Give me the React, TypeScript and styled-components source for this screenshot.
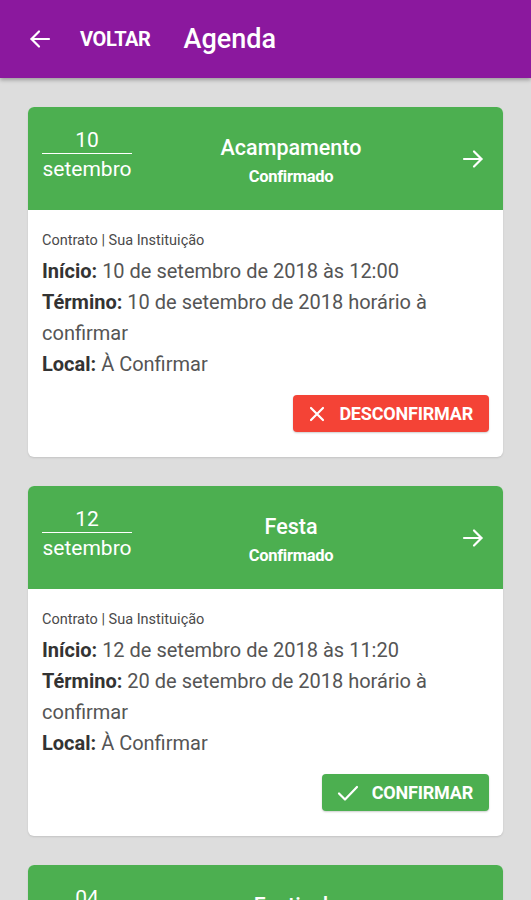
import React from "react";
import styled, { createGlobalStyle } from "styled-components";

const GlobalStyle = createGlobalStyle`
   html, body {
      margin: 0;
      padding: 0;
      background: #dddddd;
      font-family: Roboto, "Noto Sans", sans-serif;
   }
   * {
      box-sizing: border-box;
   }
`;

const Page = styled.div`
   width: 531px;
   height: 900px;
   background: #dddddd;
   overflow: hidden;
`;

const TopBar = styled.header`
   height: 78px;
   background: #8b189e;
   display: flex;
   align-items: center;
   padding-left: 28px;
   color: #fff;
   box-shadow: 0 2px 4px rgba(0, 0, 0, 0.3);
   position: relative;
   z-index: 1;
`;

const BackLabel = styled.span`
   font-weight: 700;
   font-size: 20px;
   margin-left: 28px;
   letter-spacing: -0.4px;
`;

const Title = styled.h1`
   margin: 0 0 0 33px;
   font-size: 27px;
   font-weight: 500;
`;

const List = styled.main`
   display: flex;
   flex-direction: column;
   gap: 29px;
   padding: 29px 28px 0 28px;
`;

const Card = styled.article`
   background: #fff;
   border-radius: 6px;
   overflow: hidden;
   box-shadow: 0 1px 2px rgba(0, 0, 0, 0.12);
`;

const CardHead = styled.div`
   height: 103px;
   background: #4caf50;
   color: #fff;
   display: flex;
   align-items: center;
   padding: 0 18px 0 14px;
`;

const DateBlock = styled.div`
   width: 90px;
   display: flex;
   flex-direction: column;
   align-items: center;
   margin-top: -8px;

   .day {
      font-size: 21px;
      line-height: 24px;
      width: 100%;
      text-align: center;
      border-bottom: 1.5px solid #fff;
      padding-bottom: 1px;
   }

   .month {
      font-size: 21px;
      line-height: 26px;
      margin-top: 2px;
   }
`;

const EventInfo = styled.div`
   flex: 1;
   display: flex;
   flex-direction: column;
   align-items: center;
   margin-top: 3px;
   padding-right: 11px;

   .name {
      font-size: 21.5px;
      font-weight: 500;
      line-height: 26px;
   }

   .status {
      font-size: 16.5px;
      font-weight: 700;
      margin-top: 6px;
      letter-spacing: -0.3px;
   }
`;

const CardBody = styled.div`
   padding: 22px 14px 25px 14px;
   display: flex;
   flex-direction: column;
`;

const Origin = styled.div`
   font-size: 14.5px;
   line-height: 18px;
   color: #4a4a4a;
   margin-bottom: 6px;
`;

const Line = styled.p`
   margin: 0;
   font-size: 20px;
   line-height: 31px;
   color: #555;

   b {
      color: #333;
      font-weight: 700;
   }
`;

const Actions = styled.div`
   display: flex;
   justify-content: flex-end;
   margin-top: 15px;
`;

const ActionButton = styled.button<{ $variant: "confirm" | "cancel" }>`
   height: 37px;
   border: none;
   border-radius: 4px;
   background: ${({ $variant }) => ($variant === "confirm" ? "#4caf50" : "#f44336")};
   color: #fff;
   display: flex;
   align-items: center;
   gap: 13px;
   padding: 0 16px 0 15px;
   font-family: Roboto, sans-serif;
   font-weight: 700;
   font-size: 18px;
   letter-spacing: -0.2px;
   box-shadow: 0 1px 2px rgba(0, 0, 0, 0.2);
`;

const ArrowIcon = ({ left }: { left?: boolean }) => (
   <svg width="24" height="24" viewBox="0 0 24 24" fill="none" stroke="#fff" strokeWidth="2.2" strokeLinecap="round" strokeLinejoin="round">
      {left ? (
         <>
            <path d="M21 12H3.5" />
            <path d="M11 4.5L3.5 12l7.5 7.5" />
         </>
      ) : (
         <>
            <path d="M3 12h17.5" />
            <path d="M13 4.5l7.5 7.5-7.5 7.5" />
         </>
      )}
   </svg>
);

const CrossIcon = () => (
   <svg width="18" height="18" viewBox="0 0 18 18" stroke="#fff" strokeWidth="2.2" strokeLinecap="round">
      <path d="M3 3l12 12M15 3L3 15" />
   </svg>
);

const CheckIcon = () => (
   <svg width="22" height="18" viewBox="0 0 22 18" fill="none" stroke="#fff" strokeWidth="2.2" strokeLinecap="round" strokeLinejoin="round">
      <path d="M2 9.5l6 6L20 3" />
   </svg>
);

interface EventData {
   day: string;
   month: string;
   name: string;
   status: string;
   start: string;
   end: string;
   place: string;
   confirmed: boolean;
}

const events: EventData[] = [
   {
      day: "10",
      month: "setembro",
      name: "Acampamento",
      status: "Confirmado",
      start: "10 de setembro de 2018 às 12:00",
      end: "10 de setembro de 2018 horário à confirmar",
      place: "À Confirmar",
      confirmed: true
   },
   {
      day: "12",
      month: "setembro",
      name: "Festa",
      status: "Confirmado",
      start: "12 de setembro de 2018 às 11:20",
      end: "20 de setembro de 2018 horário à confirmar",
      place: "À Confirmar",
      confirmed: false
   },
   {
      day: "04",
      month: "outubro",
      name: "Festival",
      status: "Confirmado",
      start: "04 de outubro de 2018 às 10:00",
      end: "04 de outubro de 2018 horário à confirmar",
      place: "À Confirmar",
      confirmed: false
   }
];

const EventCard: React.FC<{ event: EventData }> = ({ event }) => (
   <Card>
      <CardHead>
         <DateBlock>
            <span className="day">{event.day}</span>
            <span className="month">{event.month}</span>
         </DateBlock>
         <EventInfo>
            <span className="name">{event.name}</span>
            <span className="status">{event.status}</span>
         </EventInfo>
         <ArrowIcon />
      </CardHead>
      <CardBody>
         <Origin>Contrato | Sua Instituição</Origin>
         <Line>
            <b>Início:</b> {event.start}
         </Line>
         <Line>
            <b>Término:</b> {event.end}
         </Line>
         <Line>
            <b>Local:</b> {event.place}
         </Line>
         <Actions>
            {event.confirmed ? (
               <ActionButton $variant="cancel">
                  <CrossIcon />
                  DESCONFIRMAR
               </ActionButton>
            ) : (
               <ActionButton $variant="confirm">
                  <CheckIcon />
                  CONFIRMAR
               </ActionButton>
            )}
         </Actions>
      </CardBody>
   </Card>
);

const App: React.FC = () => (
   <Page>
      <GlobalStyle />
      <TopBar>
         <ArrowIcon left />
         <BackLabel>VOLTAR</BackLabel>
         <Title>Agenda</Title>
      </TopBar>
      <List>
         {events.map((e) => (
            <EventCard key={e.day} event={e} />
         ))}
      </List>
   </Page>
);

export default App;
